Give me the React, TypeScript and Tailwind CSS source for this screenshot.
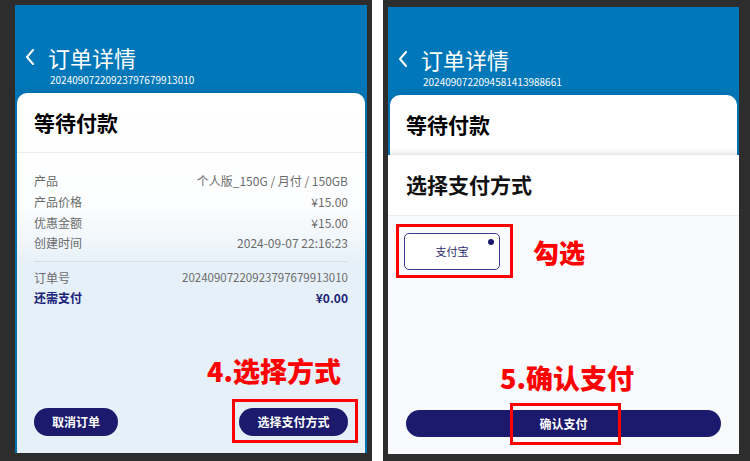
import { ReactNode } from 'react';

const navy = 'bg-[#1b1a6c]';

const Back = () => (
  <svg width="10" height="16" viewBox="0 0 10 16" className="shrink-0">
    <polyline points="8,1 2,8 8,15" fill="none" stroke="white" strokeWidth="2" strokeLinecap="round" strokeLinejoin="round" />
  </svg>
);

const Header = ({ orderNo }: { orderNo: string }) => (
  <div className="h-[88px] shrink-0 bg-[#0077b8] pl-[10px] pt-[41px] text-white">
    <div className="flex items-center gap-[13px] h-[22px]">
      <Back />
      <span className="text-[22px] leading-[22px]">订单详情</span>
    </div>
    <div className="pl-[25px] mt-[6px] text-[10px] leading-[12px]">{orderNo}</div>
  </div>
);

const Row = ({ label, value, strong }: { label: string; value: string; strong?: boolean }) => (
  <div
    className={`flex justify-between items-center h-[20.7px] text-[12px] ${
      strong ? 'font-bold text-[#1b237a]' : 'text-[#6b6b6b]'
    }`}
  >
    <span>{label}</span>
    <span className={value.length > 20 && !value.includes(' ') ? 'text-[11.5px]' : ''}>{value}</span>
  </div>
);

const Mark = ({ className, children }: { className: string; children?: ReactNode }) => (
  <div className={`absolute ${className}`}>{children}</div>
);

const LeftScreen = () => (
  <div className="relative w-[352px] h-[448px] flex flex-col overflow-hidden bg-[#0077b8]">
    <Header orderNo="20240907220923797679913010" />
    <div className="flex-1 mx-[2px] rounded-t-[10px] flex flex-col shadow-[0_0_8px_rgba(0,0,0,0.12)] bg-[linear-gradient(180deg,#ffffff_0%,#fdfeff_30%,#f2f7fb_40%,#e6f0f8_48%,#e6f0f8_100%)]">
      <div className="h-[60px] shrink-0 flex items-center px-[17px] border-b border-[#e8ecf0]">
        <span className="text-[21px] font-bold text-black">等待付款</span>
      </div>
      <div className="px-[17px] pt-[18px]">
        <Row label="产品" value="个人版_150G / 月付 / 150GB" />
        <Row label="产品价格" value="¥15.00" />
        <Row label="优惠金额" value="¥15.00" />
        <Row label="创建时间" value="2024-09-07 22:16:23" />
        <div className="mt-[7.5px] mb-[5px] border-t border-[#d5dde5]" />
        <Row label="订单号" value="20240907220923797679913010" />
        <Row label="还需支付" value="¥0.00" strong />
      </div>
      <div className="flex-1" />
      <div className="flex justify-between px-[17px] pb-[17px]">
        <button className={`${navy} h-[28px] w-[84px] rounded-full text-white text-[12px] font-semibold`}>取消订单</button>
        <button className={`${navy} h-[28px] w-[109px] rounded-full text-white text-[12px] font-semibold`}>选择支付方式</button>
      </div>
    </div>
    <Mark className="left-[192px] top-[351px] text-[27px] leading-[30px] font-black text-[#ff0000]">4.选择方式</Mark>
    <Mark className="left-[217px] top-[394px] w-[126px] h-[44px] border-[3px] border-[#ff0000]" />
  </div>
);

const RightScreen = () => (
  <div className="relative w-[351px] h-[447px] flex flex-col overflow-hidden bg-[#0077b8]">
    <Header orderNo="2024090722094581413988661" />
    <div className="h-[60px] shrink-0 mx-[2px] rounded-t-[10px] flex items-center px-[16px] bg-white shadow-[0_0_8px_rgba(0,0,0,0.12)]">
      <span className="text-[21px] font-bold text-black">等待付款</span>
    </div>
    <div className="flex-1 flex flex-col bg-[#f9fafd] shadow-[0_-2px_6px_rgba(0,0,0,0.12)]">
      <div className="h-[61px] shrink-0 flex items-center px-[18px] border-b border-[#e8ebef] bg-white">
        <span className="text-[21px] font-bold text-[#111]">选择支付方式</span>
      </div>
      <div className="px-[16px] pt-[17px]">
        <div className="relative w-[96px] h-[37px] rounded-[5px] border border-[#3b3a86] bg-white flex items-center justify-center text-[11px] text-[#2b2a70]">
          支付宝
          <span className="absolute right-[5px] top-[5px] w-[6px] h-[6px] rounded-full bg-[#1b1a6c]" />
        </div>
      </div>
      <div className="flex-1" />
      <div className="px-[18px] pb-[17px]">
        <button className={`${navy} w-full h-[27px] rounded-full text-white text-[12px] font-semibold`}>确认支付</button>
      </div>
    </div>
    <Mark className="left-[8px] top-[217px] w-[117px] h-[54px] border-[3px] border-[#ff0000]" />
    <Mark className="left-[145px] top-[230px] text-[26px] leading-[30px] font-black text-[#ff0000]">勾选</Mark>
    <Mark className="left-[112px] top-[356px] text-[27px] leading-[30px] font-black text-[#ff0000]">5.确认支付</Mark>
    <Mark className="left-[122px] top-[396px] w-[111px] h-[42px] border-[3px] border-[#ff0000]" />
  </div>
);

export default function App() {
  return (
    <div className="w-[750px] h-[461px] flex bg-white font-['Noto_Sans_CJK_SC',sans-serif]">
      <div className="w-[372px] h-full bg-[#2d2d2d] pl-[15px] pt-[5px]">
        <LeftScreen />
      </div>
      <div className="w-[11px]" />
      <div className="w-[367px] h-full bg-[#2d2d2d] pl-[5px] pt-[7px]">
        <RightScreen />
      </div>
    </div>
  );
}
